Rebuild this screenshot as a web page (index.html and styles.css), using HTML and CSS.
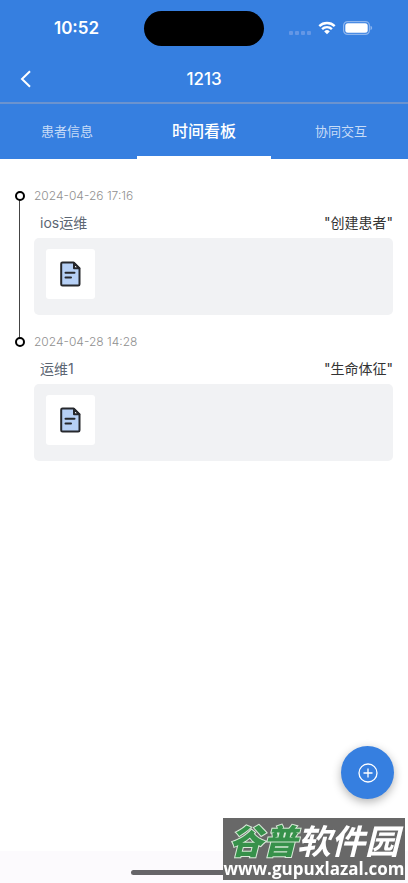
FILE: index.html
```html
<!DOCTYPE html>
<html lang="zh-CN">
<head>
<meta charset="utf-8">
<meta name="viewport" content="width=device-width, initial-scale=1">
<title>1213</title>
<link rel="stylesheet" href="styles.css">
</head>
<body>
<header class="top">
  <div class="status">
    <span class="clock">10:52</span>
    <span class="island"></span>
    <span class="signals">
      <svg class="dots" viewBox="0 0 22 4" aria-hidden="true"><rect x="0" y="0" width="4" height="4" rx="1"/><rect x="6" y="0" width="4" height="4" rx="1"/><rect x="12" y="0" width="4" height="4" rx="1"/><rect x="18" y="0" width="4" height="4" rx="1"/></svg>
      <svg class="wifi" viewBox="0 0 18 14" aria-hidden="true"><path d="M1.3 5.2a11 11 0 0 1 15.4 0M4.1 8.1a7 7 0 0 1 9.8 0"/><path class="wifi-base" d="M9 13.2 6.2 10.4a4 4 0 0 1 5.6 0z"/></svg>
      <svg class="battery" viewBox="0 0 30 14" aria-hidden="true"><rect class="case" x=".6" y=".6" width="25.800" height="12.800" rx="4"/><rect class="charge" x="2.300" y="2.300" width="22.400" height="9.400" rx="2.500"/><path class="cap" d="M27.500 4.800q1.700.6 1.700 2.200t-1.700 2.200z"/></svg>
    </span>
  </div>
  <div class="nav">
    <button class="back" type="button" aria-label="返回"><svg viewBox="0 0 12 18" aria-hidden="true"><path d="M10 1.200 2 9l8 7.800"/></svg></button>
    <h1>1213</h1>
  </div>
  <nav class="tabs">
    <a href="#info">患者信息</a>
    <a class="active" href="#timeline" aria-current="page">时间看板</a>
    <a href="#talk">协同交互</a>
  </nav>
</header>

<main>
  <ol class="timeline">
    <li>
      <time datetime="2024-04-26T17:16">2024-04-26 17:16</time>
      <div class="row"><span class="name">ios运维</span><span class="event">"创建患者"</span></div>
      <div class="card">
        <button class="file" type="button" aria-label="文档"><svg viewBox="0 0 21 26" aria-hidden="true"><path class="sheet" d="M2.500 1.500H13.500L19.500 7.500v15.700a1.300 1.300 0 0 1-1.300 1.300H2.500a1.300 1.300 0 0 1-1.300-1.300V2.800a1.300 1.300 0 0 1 1.300-1.300z"/><path class="fold" d="M14 2v5.300h5.300z"/><path class="lines" d="M5.500 11.800h9M5.500 16.500h5.500"/></svg></button>
      </div>
    </li>
    <li>
      <time datetime="2024-04-28T14:28">2024-04-28 14:28</time>
      <div class="row"><span class="name">运维1</span><span class="event">"生命体征"</span></div>
      <div class="card">
        <button class="file" type="button" aria-label="文档"><svg viewBox="0 0 21 26" aria-hidden="true"><path class="sheet" d="M2.500 1.500H13.500L19.500 7.500v15.700a1.300 1.300 0 0 1-1.300 1.300H2.500a1.300 1.300 0 0 1-1.300-1.300V2.800a1.300 1.300 0 0 1 1.300-1.300z"/><path class="fold" d="M14 2v5.300h5.300z"/><path class="lines" d="M5.500 11.800h9M5.500 16.500h5.500"/></svg></button>
      </div>
    </li>
  </ol>
</main>

<button class="add" type="button" aria-label="添加"><svg viewBox="0 0 20 20" aria-hidden="true"><circle cx="10" cy="10" r="9"/><path d="M10 5.500v9M5.500 10h9"/></svg></button>
<footer class="home"><span></span></footer>
<div class="mark">
  <div class="mark-name"><b>谷普</b>软件园</div>
  <div class="mark-url">www.gupuxlazal.com</div>
</div>
</body>
</html>
```
FILE: styles.css
```css
*, *::before, *::after { box-sizing: border-box; }

body {
  margin: 0;
  min-height: 100vh;
  display: flex;
  flex-direction: column;
  background: #fff;
  font-family: Inter, "Noto Sans CJK SC", sans-serif;
}

button { border: 0; padding: 0; cursor: pointer; }
svg { display: block; fill: none; }

.top { background: #367fe0; color: #fff; }

.status {
  height: 56px;
  display: grid;
  grid-template-columns: 1fr 120px 1fr;
  align-items: center;
}
.clock { justify-self: center; padding-left: 9px; font-size: 17px; font-weight: 600; }
.island { height: 35px; border-radius: 18px; background: #000; }
.signals { display: flex; align-items: center; gap: 7px; padding-left: 25px; }
.dots { width: 22px; height: 4px; margin-top: 9px; fill: #6497e6; }
.wifi { width: 18px; height: 14px; stroke: #fff; stroke-width: 2.400; }
.wifi-base { fill: #fff; stroke: none; }
.battery { width: 30px; height: 14px; }
.case { stroke: #8db5ed; stroke-width: 1.200; }
.charge { fill: #fff; }
.cap { fill: #8db5ed; }

.nav {
  height: 48px;
  display: grid;
  grid-template-columns: 52px 1fr 52px;
  align-items: center;
  border-bottom: 2px solid #6b93cf;
}
.back { height: 46px; display: grid; place-items: center; background: none; }
.back svg { width: 12px; height: 18px; stroke: #fff; stroke-width: 2; }
h1 { margin: 0; text-align: center; font-size: 17px; font-weight: 500; }

.tabs { display: grid; grid-template-columns: repeat(3, 1fr); gap: 3px; height: 55px; }
.tabs a {
  display: flex;
  align-items: center;
  justify-content: center;
  border-bottom: 3px solid transparent;
  color: #c8dcf7;
  font-size: 13px;
  text-decoration: none;
}
.tabs .active { border-color: #fff; color: #fff; font-size: 16px; font-weight: 500; }

main { flex: 1; padding: 28px 15px 0; }
.timeline { margin: 0; padding: 0; list-style: none; }
.timeline li { position: relative; padding: 0 0 18px 19px; }
.timeline li::before {
  content: "";
  position: absolute;
  z-index: 1;
  left: 0;
  top: 4px;
  width: 10px;
  height: 10px;
  border: 2px solid #000;
  border-radius: 50%;
  background: #fff;
}
.timeline li:not(:last-child)::after {
  content: "";
  position: absolute;
  left: 4px;
  top: 10px;
  bottom: -8px;
  width: 1px;
  background: #444;
}
time { display: block; color: #909090; font-size: 12px; font-weight: 300; line-height: 18px; }
.row {
  display: flex;
  justify-content: space-between;
  padding: 7px 0 4px 6px;
  font-size: 14px;
  line-height: 22px;
}
.name { color: #5c6673; }
.event { color: #333; }
.card { padding: 11px 12px 16px; border-radius: 5px; background: #f1f2f4; }
.file {
  width: 49px;
  height: 50px;
  display: grid;
  place-items: center;
  border-radius: 3px;
  background: #fff;
}
.file svg { width: 21px; height: 26px; stroke: #26282d; stroke-width: 2; stroke-linejoin: round; }
.sheet { fill: #b6d0f6; }
.fold { fill: #fff; }
.lines { stroke-linecap: round; }

.add {
  position: fixed;
  right: 14px;
  bottom: 84px;
  width: 53px;
  height: 53px;
  display: grid;
  place-items: center;
  border-radius: 50%;
  background: #367fe0;
  box-shadow: 0 3px 10px rgba(0, 0, 0, .3);
}
.add svg { width: 20px; height: 20px; stroke: #fff; stroke-width: 1.300; }

.home { height: 32px; display: flex; justify-content: center; padding-top: 19px; background: #fcfafd; }
.home span { width: 36%; height: 5px; border-radius: 3px; background: #666568; }

.mark {
  position: fixed;
  right: 3px;
  bottom: 3px;
  width: 182px;
  height: 62px;
  padding-top: 5px;
  background: #686868;
  color: #fff;
  text-align: center;
  white-space: nowrap;
}
.mark-name {
  font-size: 34px;
  font-weight: 700;
  font-style: italic;
  line-height: 34px;
  font-family: "Noto Sans CJK SC", sans-serif;
}
.mark-name b {
  color: #36914a;
  -webkit-text-stroke: 2px #d9ead9;
  paint-order: stroke fill;
}
.mark-url { font: 700 17px/23px "Open Sans", sans-serif; }
```
